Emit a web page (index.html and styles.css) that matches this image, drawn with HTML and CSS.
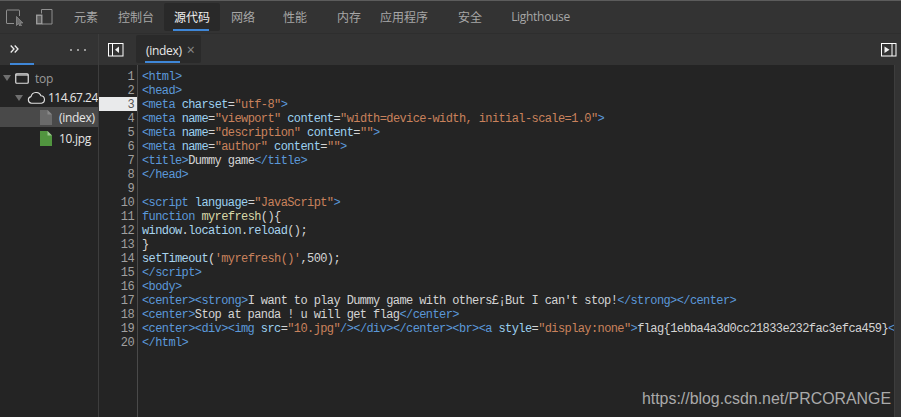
FILE: index.html
```html
<!DOCTYPE html>
<html lang="zh">
<head>
<meta charset="utf-8">
<title>DevTools</title>
<link rel="stylesheet" href="styles.css">
</head>
<body>
<div class="app">
  <header class="toolbar">
    <svg class="tool-icon" width="18" height="18" viewBox="0 0 18 18" fill="none"><path d="M13.500 8V2.500a.5.5 0 0 0-.5-.5H1a.5.5 0 0 0-.5.5V15a.5.5 0 0 0 .5.5H8" stroke="#8f8f8f"/><path d="M10.500 8.500v9l2-2 1.500 3 1.500-.7-1.500-2.800h2.800z" fill="#6e6e6e" stroke="#8f8f8f" stroke-width=".8"/></svg>
    <svg class="tool-icon device" width="17" height="18" viewBox="0 0 17 18" fill="none"><path d="M5.500 5.500V1.500h10.500v14.500H6" stroke="#8f8f8f"/><rect x=".7" y="7.200" width="5.100" height="8.600" fill="#5a5a5a" stroke="#a0a0a0" stroke-width="1.300"/></svg>
    <nav class="tabs">
      <span class="tab">元素</span>
      <span class="tab">控制台</span>
      <span class="tab active">源代码</span>
      <span class="tab tab-net">网络</span>
      <span class="tab tab-perf">性能</span>
      <span class="tab tab-wide">内存</span>
      <span class="tab tab-app">应用程序</span>
      <span class="tab tab-wide">安全</span>
      <span class="tab tab-lh">Lighthouse</span>
    </nav>
  </header>
  <main class="panes">
    <aside class="sidebar">
      <div class="side-head">
        <span class="chev"><svg width="9" height="8" viewBox="0 0 9 8" fill="none"><path d="M.7.5L4 4 .7 7.500M4.700.5L8 4 4.700 7.500" stroke="#eee" stroke-width="1.300"/></svg></span>
        <span class="dots"><i></i><i></i><i></i></span>
      </div>
      <ul class="tree">
        <li class="row row-top"><span class="arrow"></span>
          <svg width="14" height="11" viewBox="0 0 14 11" fill="none"><rect x=".75" y=".75" width="12.500" height="9.500" rx="1" stroke="#e0e0e0" stroke-width="1.200"/><path d="M1 2h12" stroke="#e0e0e0" stroke-width="1.200"/></svg>
          <span class="muted">top</span></li>
        <li class="row row-host"><span class="arrow"></span>
          <svg width="19" height="12" viewBox="0 0 19 12" fill="none"><path d="M4.500 11.300a3.400 3.400 0 0 1-.5-6.700 5.200 5.200 0 0 1 9.900-.8 3.800 3.800 0 0 1 .6 7.500z" stroke="#e0e0e0" stroke-width="1.100"/></svg>
          <span class="host">114.67.24</span></li>
        <li class="row row-file selected">
          <svg width="12" height="15" viewBox="0 0 12 15"><path d="M0 0h7.500L12 4.500V15H0z" fill="#6a6a6a"/><path d="M7.500 0L12 4.500H7.500z" fill="#888"/></svg>
          <span>(index)</span></li>
        <li class="row row-file row-jpg">
          <svg width="12" height="15" viewBox="0 0 12 15"><path d="M0 0h7.500L12 4.500V15H0z" fill="#51953f"/><path d="M7.500 0L12 4.500H7.500z" fill="#9cc98f"/></svg>
          <span>10.jpg</span></li>
      </ul>
    </aside>
    <section class="editor">
      <div class="editor-head">
        <svg class="pane-btn" width="16" height="14" viewBox="0 0 16 14" fill="none"><rect x=".5" y=".5" width="14.500" height="12.500" stroke="#fff"/><path d="M4.500 1v12" stroke="#fff"/><path d="M11 3.500v6.500L7 6.800z" fill="#eee"/></svg>
        <div class="file-tab"><span>(index)</span><b>×</b></div>
        <svg class="pane-btn pane-right" width="16" height="14" viewBox="0 0 16 14" fill="none"><rect x=".5" y=".5" width="14.500" height="12.500" stroke="#fff"/><path d="M11 1v12" stroke="#fff"/><path d="M3.500 3.500v6.500L8.500 6.800z" fill="#eee"/></svg>
      </div>
      <div class="code-wrap">
        <ol class="gutter">
          <li>1</li><li>2</li><li class="current">3</li><li>4</li><li>5</li><li>6</li><li>7</li><li>8</li><li>9</li><li>10</li><li>11</li><li>12</li><li>13</li><li>14</li><li>15</li><li>16</li><li>17</li><li>18</li><li>19</li><li>20</li>
        </ol>
        <div class="code">
<div class="ln"><span class="t">&lt;html&gt;</span></div>
<div class="ln"><span class="t">&lt;head&gt;</span></div>
<div class="ln"><span class="t">&lt;meta</span> <span class="a">charset</span>=<span class="s">"utf-8"</span><span class="t">&gt;</span></div>
<div class="ln"><span class="t">&lt;meta</span> <span class="a">name</span>=<span class="s">"viewport"</span> <span class="a">content</span>=<span class="s">"width=device-width, initial-scale=1.0"</span><span class="t">&gt;</span></div>
<div class="ln"><span class="t">&lt;meta</span> <span class="a">name</span>=<span class="s">"description"</span> <span class="a">content</span>=<span class="s">""</span><span class="t">&gt;</span></div>
<div class="ln"><span class="t">&lt;meta</span> <span class="a">name</span>=<span class="s">"author"</span> <span class="a">content</span>=<span class="s">""</span><span class="t">&gt;</span></div>
<div class="ln"><span class="t">&lt;title&gt;</span>Dummy game<span class="t">&lt;/title&gt;</span></div>
<div class="ln"><span class="t">&lt;/head&gt;</span></div>
<div class="ln">&nbsp;</div>
<div class="ln"><span class="t">&lt;script</span> <span class="a">language</span>=<span class="s">"JavaScript"</span><span class="t">&gt;</span></div>
<div class="ln"><span class="k">function</span> <span class="f">myrefresh</span>(){</div>
<div class="ln"><span class="v">window</span>.<span class="v">location</span>.<span class="v">reload</span>();</div>
<div class="ln">}</div>
<div class="ln"><span class="v">setTimeout</span>(<span class="s">'myrefresh()'</span>,500);</div>
<div class="ln"><span class="t">&lt;/script&gt;</span></div>
<div class="ln"><span class="t">&lt;body&gt;</span></div>
<div class="ln"><span class="t">&lt;center&gt;&lt;strong&gt;</span>I want to play Dummy game with others£¡But I can't stop!<span class="t">&lt;/strong&gt;&lt;/center&gt;</span></div>
<div class="ln"><span class="t">&lt;center&gt;</span>Stop at panda ! u will get flag<span class="t">&lt;/center&gt;</span></div>
<div class="ln"><span class="t">&lt;center&gt;&lt;div&gt;&lt;img</span> <span class="a">src</span>=<span class="s">"10.jpg"</span><span class="t">/&gt;&lt;/div&gt;&lt;/center&gt;&lt;br&gt;&lt;a</span> <span class="a">style</span>=<span class="s">"display:none"</span><span class="t">&gt;</span>flag{1ebba4a3d0cc21833e232fac3efca459}<span class="t">&lt;</span></div>
<div class="ln"><span class="t">&lt;/html&gt;</span></div>
        </div>
        <div class="scrollbar"></div>
      </div>
    </section>
  </main>
  <div class="watermark">https://blog.csdn.net/PRCORANGE</div>
</div>
</body>
</html>
```

FILE: styles.css
```css
* { box-sizing: border-box; }
html, body { margin: 0; padding: 0; background: #242424; }
ul, ol { list-style: none; margin: 0; padding: 0; }

.app {
  position: relative;
  width: 901px;
  height: 417px;
  display: flex;
  flex-direction: column;
  overflow: hidden;
  font-family: "Open Sans", "Noto Sans CJK SC", sans-serif;
  font-size: 12px;
  letter-spacing: -.3px;
  color: #dcdcdc;
  background: #242424;
}

/* top toolbar */
.toolbar {
  flex: none;
  height: 34px;
  display: flex;
  align-items: center;
  padding-left: 6px;
  background: #333;
  border-top: 1px solid #5c5c5c;
  border-bottom: 1px solid #2e2e2e;
}
.tool-icon { flex: none; }
.device { margin-left: 12px; }
.tabs {
  display: flex;
  align-self: stretch;
  margin-left: 11px;
  padding-top: 2px;
}
.tab {
  height: 28px;
  padding: 0 10px;
  line-height: 28px;
  color: #a6a6a6;
  font-family: "Noto Sans CJK SC", "Open Sans", sans-serif;
  letter-spacing: 0;
  white-space: nowrap;
}
.tab.active {
  color: #f0f0f0;
  background: #292929;
  border-radius: 2px;
  background-image: linear-gradient(#3f87d8, #3f87d8);
  background-size: 36px 2px;
  background-position: 9px 26px;
  background-repeat: no-repeat;
}
.tab-net { padding-left: 11px; }
.tab-perf { margin-left: 8px; }
.tab-wide { margin-left: 10px; }
.tab-app { margin-left: -1px; }
.tab-lh { margin-left: 9px; font-family: "Open Sans", sans-serif; letter-spacing: -.3px; }

/* panes */
.panes { flex: 1; display: flex; min-height: 0; }
.sidebar {
  flex: none;
  width: 99px;
  border-right: 1px solid #3d3d3d;
  overflow: hidden;
}
.side-head {
  height: 31px;
  background: #333;
  display: flex;
  align-items: center;
  justify-content: space-between;
  padding: 0 12px 0 10px;
}
.chev {
  width: 24px;
  height: 31px;
  padding-top: 11px;
  border-bottom: 2px solid #3f87d8;
}
.chev svg { display: block; }
.dots { display: flex; gap: 5px; }
.dots i { width: 2px; height: 2px; background: #999; }
.tree { padding-top: 3px; }
.row {
  height: 20px;
  display: flex;
  align-items: center;
  white-space: nowrap;
  color: #e6e6e6;
}
.row-top { padding-left: 3px; }
.row-host { height: 19px; padding-left: 15px; }
.row-file { padding-left: 40px; gap: 7px; }
.row-jpg { height: 21px; padding-top: 1px; }
.selected { background: #494949; }
.row svg { flex: none; }
.muted { margin-left: 6px; color: #9a9a9a; }
.host { margin-left: 2px; letter-spacing: -.5px; }
.arrow {
  flex: none;
  width: 0;
  height: 0;
  margin-right: 4px;
  border-left: 4px solid transparent;
  border-right: 4px solid transparent;
  border-top: 6px solid #6f6f6f;
}

/* editor */
.editor { flex: 1; min-width: 0; display: flex; flex-direction: column; }
.editor-head {
  flex: none;
  height: 31px;
  display: flex;
  align-items: center;
  padding-left: 9px;
  padding-right: 4px;
  background: #333;
}
.pane-btn { flex: none; }
.pane-right { margin-left: auto; }
.file-tab {
  align-self: flex-start;
  height: 28px;
  width: 65px;
  margin-left: 12px;
  margin-top: 1px;
  padding: 2px 0 0 10px;
  display: flex;
  align-items: center;
  gap: 5px;
  color: #e8e8e8;
  background: #2a2a2a;
  border-radius: 2px;
  background-image: linear-gradient(#3f87d8, #3f87d8);
  background-size: 35px 2px;
  background-position: 9px 26px;
  background-repeat: no-repeat;
}
.file-tab b { font-weight: 400; font-size: 14px; color: #8a8a8a; line-height: 1; }

.code-wrap { flex: 1; min-height: 0; display: flex; }
.gutter {
  flex: none;
  width: 39px;
  padding-top: 4px;
  border-right: 1px solid #4a4a4a;
  font-family: "Liberation Mono", monospace;
  font-size: 12px;
  letter-spacing: -.6px;
  color: #a0a0a0;
  text-align: right;
}
.gutter li { height: 14px; line-height: 14px; padding: 1px 3px 0 0; }
.gutter .current { background: #e9eaeb; color: #555; }
.code {
  flex: 1;
  min-width: 0;
  padding: 5px 0 0 4px;
  overflow: hidden;
  font-family: "Liberation Mono", monospace;
  font-size: 12px;
  letter-spacing: -.6px;
  color: #d4d4d4;
}
.ln { height: 14px; line-height: 14px; white-space: pre; }
.t { color: #5b98d9; }
.a { color: #9bd0f0; }
.s { color: #c9825c; }
.k { color: #5b98d9; }
.f { color: #d8d8a8; }
.v { color: #a8d4ef; }
.scrollbar {
  flex: none;
  width: 7px;
  background: #333;
  border-left: 1px solid #3d3d3d;
}

.watermark {
  position: absolute;
  right: 10px;
  bottom: 8px;
  font-family: "Liberation Sans", sans-serif;
  font-size: 15.900px;
  letter-spacing: 0;
  line-height: 20px;
  color: #aaa;
}
```
